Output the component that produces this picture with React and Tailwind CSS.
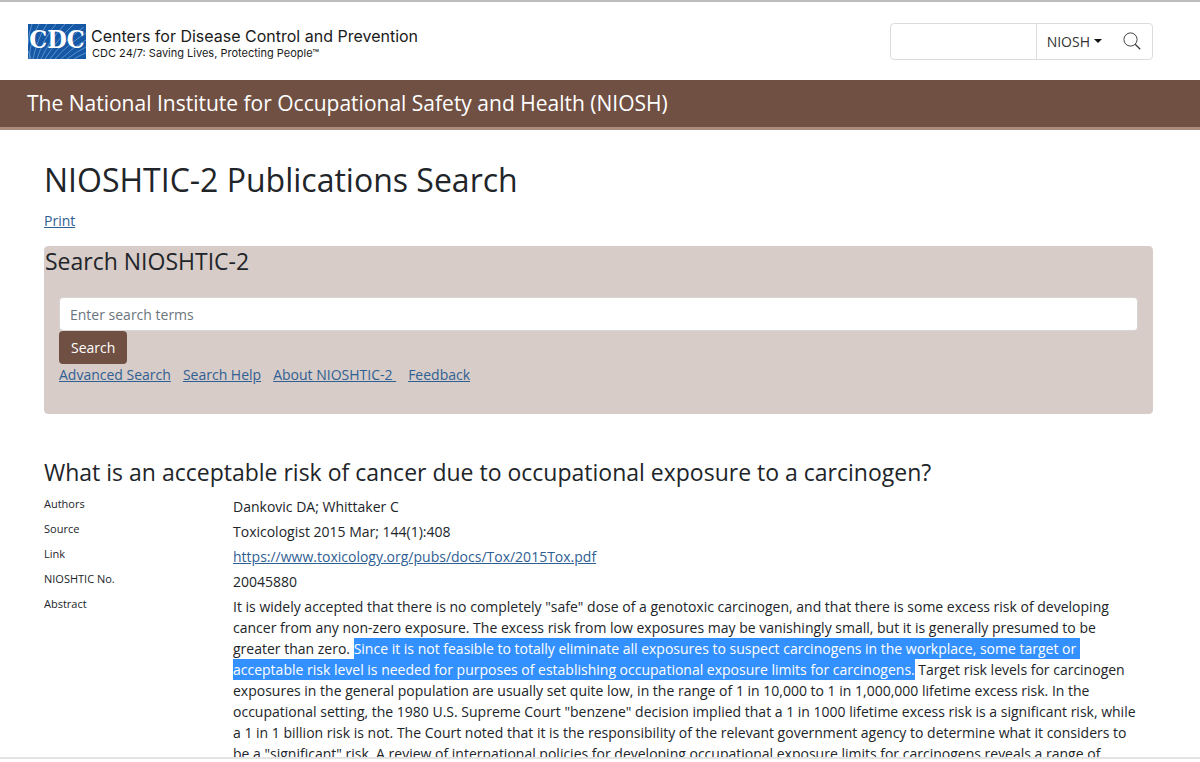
const linkClass = "text-[#2f6094] underline underline-offset-1";

const rays = [
  "M0 20 Q1 8 4 0", "M1 35 Q3 14 11 0", "M5 35 Q9 15 19 0", "M9 35 Q15 15 28 0", "M13 35 Q21 17 37 0",
  "M17 35 Q27 18 46 0", "M22 35 Q34 18 56 3", "M27 35 Q39 21 58 9", "M33 35 Q44 24 58 16",
  "M39 35 Q48 28 58 23", "M46 35 Q52 31 58 29", "M3 35 Q2 30 0 27",
];

function CdcLogo() {
  return (
    <a href="#home" aria-label="CDC home" className="flex items-center gap-[5px] font-['Inter',sans-serif] text-[#1a1a1a]">
      <svg viewBox="0 0 58 35" className="h-[35px] w-[58px] shrink-0" role="img" aria-label="CDC">
        <rect width="58" height="35" fill="#1458a6" />
        <g stroke="#6d9fd4" strokeWidth="0.8" fill="none">
          {rays.map((d) => <path key={d} d={d} />)}
        </g>
        <text x="29" y="24" textAnchor="middle" fill="#fff" fontFamily="'DejaVu Serif Condensed','Liberation Serif',serif" fontWeight="700" fontSize="25">CDC</text>
      </svg>
      <span className="flex flex-col pt-1">
        <span className="text-[16px] leading-[20px]">Centers for Disease Control and Prevention</span>
        <span className="pl-px text-[11px] leading-[14px]">CDC 24/7: Saving Lives, Protecting People™</span>
      </span>
    </a>
  );
}

function SiteSearch() {
  return (
    <form className="flex h-[37px] w-[263px] rounded-[4px] border border-[#dcdcdc] text-[14px]">
      <input type="text" aria-label="Search this site" className="min-w-0 flex-1 px-2 outline-none" />
      <button type="button" className="flex items-center gap-1 border-l border-[#dcdcdc] pl-[10px] text-[#333]">
        NIOSH
        <svg viewBox="0 0 8 4" className="h-1 w-2" aria-hidden="true"><path d="M0 0H8L4 4Z" fill="#111" /></svg>
      </button>
      <button type="submit" aria-label="Submit search" className="flex w-[50px] items-center justify-center pl-[9px]">
        <svg viewBox="0 0 18 18" className="h-[18px] w-[18px]" fill="none" stroke="#444" strokeWidth="1" aria-hidden="true">
          <circle cx="7.5" cy="7.5" r="6.6" />
          <path d="M12.2 12.2 17.2 17.2" strokeWidth="1.4" />
        </svg>
      </button>
    </form>
  );
}

function Row({ label, children }) {
  return (
    <div className="flex">
      <dt className="w-[189px] shrink-0 pt-[2px] text-[11px] leading-4">{label}</dt>
      <dd className="min-w-0 flex-1 pt-[2px] text-[14px] leading-[21px]">{children}</dd>
    </div>
  );
}

export default function App() {
  return (
    <div className="flex h-screen flex-col bg-white font-['Open_Sans',sans-serif] text-[#212529]">
      <div className="flex min-h-0 flex-1 flex-col overflow-hidden border-y-2 border-t-[#bdbdbd] border-b-[#e4e4e4]">
        <header className="shrink-0">
          <div className="flex h-[78px] items-center justify-between pl-7 pr-[47px]">
            <CdcLogo />
            <SiteSearch />
          </div>
          <div className="flex h-[50px] items-start border-b-[3px] border-[#a98c7c] bg-[#705043] px-[27px] pt-[9px]">
            <a href="#niosh" className="text-[21px] leading-7 text-white">The National Institute for Occupational Safety and Health (NIOSH)</a>
          </div>
        </header>

        <main className="shrink-0 pl-11 pr-[47px] pt-[30px]">
          <h1 className="text-[32px] leading-10">NIOSHTIC-2 Publications Search</h1>
          <p className="pt-[10px] text-[14px] leading-[21px]"><a href="#print" className={linkClass}>Print</a></p>

          <section className="mt-[15px] rounded-[4px] border border-[#d8cdc9] bg-[#d7ccc8] pb-[28px]">
            <h2 className="text-[23px] leading-[28px]">Search NIOSHTIC-2</h2>
            <form className="flex flex-col items-start px-[14px] pt-[22px]">
              <input type="text" aria-label="Search terms" placeholder="Enter search terms" className="h-[34px] w-full rounded-[4px] border border-[#d5d5d5] bg-white px-[10px] text-[14px] placeholder:text-[#6c757d]" />
              <button type="submit" className="h-[33px] rounded-[4px] bg-[#705043] px-3 text-[14px] text-white">Search</button>
              <nav className="flex gap-3 text-[14px] leading-[21px]">
                <a href="#advanced" className={linkClass}>Advanced Search</a>
                <a href="#help" className={linkClass}>Search Help</a>
                <a href="#about" className={linkClass}>{"About NIOSHTIC-2\u00a0"}</a>
                <a href="#feedback" className={linkClass}>Feedback</a>
              </nav>
            </form>
          </section>

          <article className="pt-[44px]">
            <h3 className="text-[23px] leading-[28px]">What is an acceptable risk of cancer due to occupational exposure to a carcinogen?</h3>
            <dl className="flex flex-col gap-[2px] pt-2">
              <Row label="Authors">Dankovic DA; Whittaker C</Row>
              <Row label="Source">Toxicologist 2015 Mar; 144(1):408</Row>
              <Row label="Link"><a href="https://www.toxicology.org/pubs/docs/Tox/2015Tox.pdf" className={linkClass}>https://www.toxicology.org/pubs/docs/Tox/2015Tox.pdf</a></Row>
              <Row label="NIOSHTIC No.">20045880</Row>
              <Row label="Abstract">
                It is widely accepted that there is no completely "safe" dose of a genotoxic carcinogen, and that there is some excess risk of developing<br />
                cancer from any non-zero exposure. The excess risk from low exposures may be vanishingly small, but it is generally presumed to be<br />
                greater than zero. <mark className="bg-[#3390ff] text-white shadow-[0_1px_0_#3390ff,0_-1px_0_#3390ff]">Since it is not feasible to totally eliminate all exposures to suspect carcinogens in the workplace, some target or{"\u00a0"}<br />
                acceptable risk level is needed for purposes of establishing occupational exposure limits for carcinogens.</mark> Target risk levels for carcinogen<br />
                exposures in the general population are usually set quite low, in the range of 1 in 10,000 to 1 in 1,000,000 lifetime excess risk. In the<br />
                occupational setting, the 1980 U.S. Supreme Court "benzene" decision implied that a 1 in 1000 lifetime excess risk is a significant risk, while<br />
                a 1 in 1 billion risk is not. The Court noted that it is the responsibility of the relevant government agency to determine what it considers to<br />
                be a "significant" risk. A review of international policies for developing occupational exposure limits for carcinogens reveals a range of
              </Row>
            </dl>
          </article>
        </main>
      </div>
      <div className="h-[3px] shrink-0 bg-white" />
    </div>
  );
}
